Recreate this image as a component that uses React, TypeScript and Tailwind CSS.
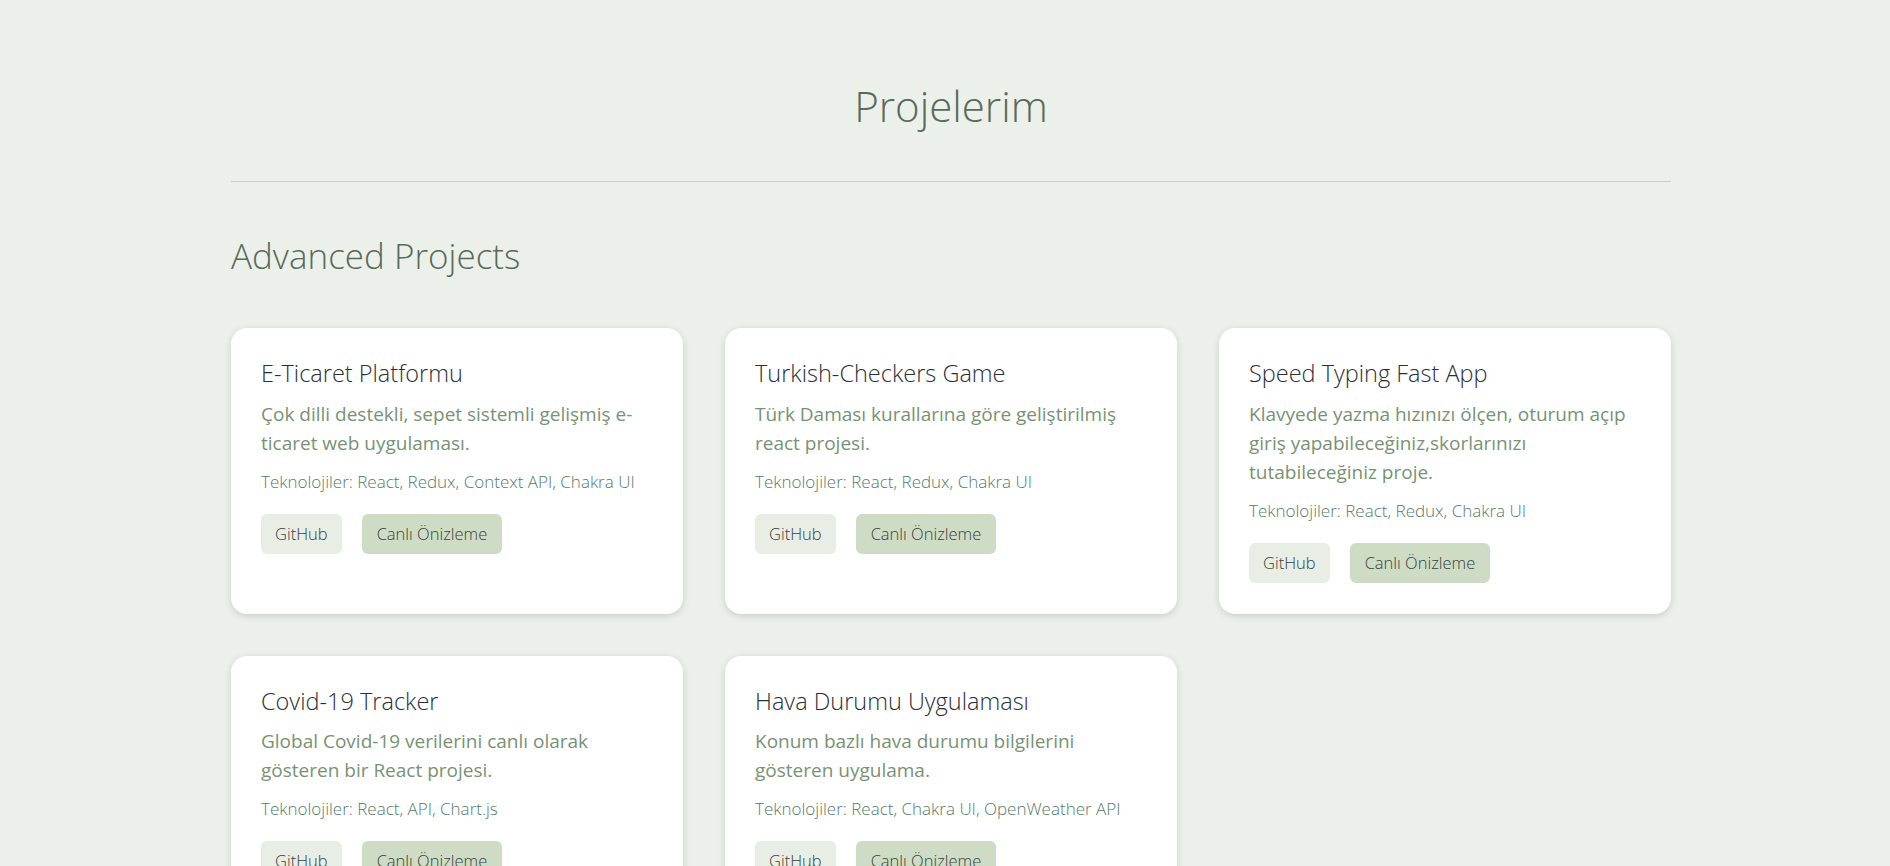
import React from "react";

type Project = {
  title: string;
  desc: string;
  tech: string;
};

const projects: Project[] = [
  {
    title: "E-Ticaret Platformu",
    desc: "Çok dilli destekli, sepet sistemli gelişmiş e-ticaret web uygulaması.",
    tech: "React, Redux, Context API, Chakra UI",
  },
  {
    title: "Turkish-Checkers Game",
    desc: "Türk Daması kurallarına göre geliştirilmiş react projesi.",
    tech: "React, Redux, Chakra UI",
  },
  {
    title: "Speed Typing Fast App",
    desc: "Klavyede yazma hızınızı ölçen, oturum açıp giriş yapabileceğiniz,skorlarınızı tutabileceğiniz proje.",
    tech: "React, Redux, Chakra UI",
  },
  {
    title: "Covid-19 Tracker",
    desc: "Global Covid-19 verilerini canlı olarak gösteren bir React projesi.",
    tech: "React, API, Chart.js",
  },
  {
    title: "Hava Durumu Uygulaması",
    desc: "Konum bazlı hava durumu bilgilerini gösteren uygulama.",
    tech: "React, Chakra UI, OpenWeather API",
  },
];

function Card({ p }: { p: Project }) {
  return (
    <div className="bg-white rounded-[16px] px-[30px] pt-[30px] pb-[31px] shadow-[0_2px_7px_rgba(60,80,60,0.2)] flex flex-col">
      <h3 className="text-[23.5px] leading-[1.3] font-light text-[#2b3038]">{p.title}</h3>
      <p className="mt-[11px] text-[19px] leading-[29px] text-[#789274]">{p.desc}</p>
      <p className="mt-[12px] text-[17px] leading-[24px] font-light text-[#557c6c]">
        Teknolojiler: {p.tech}
      </p>
      <div className="mt-[20px] flex gap-[20px]">
        <a className="h-[40px] px-[14px] flex items-center rounded-[6px] bg-[#e8eee5] text-[16.5px] font-light text-[#34423a]">
          GitHub
        </a>
        <a className="h-[40px] px-[15px] flex items-center rounded-[6px] bg-[#cfdcc5] text-[16.5px] font-light text-[#34423a]">
          Canlı Önizleme
        </a>
      </div>
    </div>
  );
}

export default function App() {
  return (
    <div
      className="min-h-[866px] bg-[#ebf0eb] flex justify-center pl-[12px]"
      style={{ fontFamily: '"Open Sans", "Noto Sans", sans-serif' }}
    >
      <div className="w-[1440px] pt-[81px] pb-[60px]">
        <h1 className="text-center text-[42px] leading-[1.2] font-light text-[#5a6a58]">Projelerim</h1>
        <div className="mt-[50px] h-px bg-[#c4cebf]" />
        <h2 className="mt-[53px] text-[35px] leading-[1.2] font-light text-[#5a6a58]">Advanced Projects</h2>
        <div className="mt-[51px] grid grid-cols-3 gap-[42px]">
          {projects.map((p) => (
            <Card key={p.title} p={p} />
          ))}
        </div>
      </div>
    </div>
  );
}
